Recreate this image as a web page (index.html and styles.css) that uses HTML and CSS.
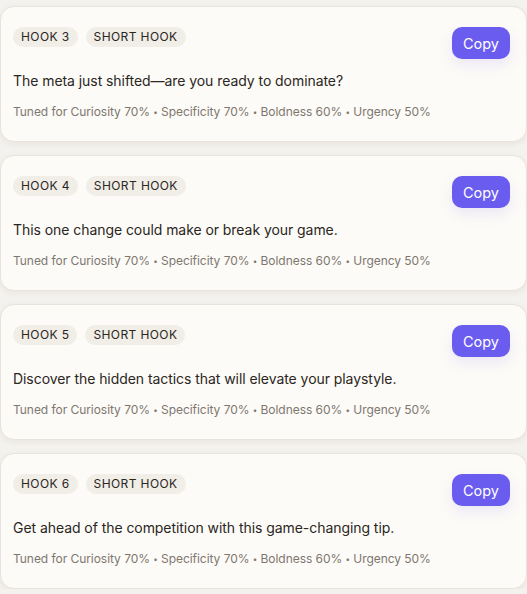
FILE: index.html
```html
<!DOCTYPE html>
<html lang="en">
<head>
<meta charset="utf-8">
<title>Hooks</title>
<link rel="stylesheet" href="styles.css">
</head>
<body>
<div class="list">
  <div class="card">
    <div class="card-head">
      <div class="chips"><span class="chip">Hook 3</span><span class="chip">Short hook</span></div>
      <button class="copy">Copy</button>
    </div>
    <p class="hook">The meta just shifted—are you ready to dominate?</p>
    <p class="meta">Tuned for Curiosity 70% <span class="dot">•</span> Specificity 70% <span class="dot">•</span> Boldness 60% <span class="dot">•</span> Urgency 50%</p>
  </div>
  <div class="card">
    <div class="card-head">
      <div class="chips"><span class="chip">Hook 4</span><span class="chip">Short hook</span></div>
      <button class="copy">Copy</button>
    </div>
    <p class="hook">This one change could make or break your game.</p>
    <p class="meta">Tuned for Curiosity 70% <span class="dot">•</span> Specificity 70% <span class="dot">•</span> Boldness 60% <span class="dot">•</span> Urgency 50%</p>
  </div>
  <div class="card">
    <div class="card-head">
      <div class="chips"><span class="chip">Hook 5</span><span class="chip">Short hook</span></div>
      <button class="copy">Copy</button>
    </div>
    <p class="hook">Discover the hidden tactics that will elevate your playstyle.</p>
    <p class="meta">Tuned for Curiosity 70% <span class="dot">•</span> Specificity 70% <span class="dot">•</span> Boldness 60% <span class="dot">•</span> Urgency 50%</p>
  </div>
  <div class="card">
    <div class="card-head">
      <div class="chips"><span class="chip">Hook 6</span><span class="chip">Short hook</span></div>
      <button class="copy">Copy</button>
    </div>
    <p class="hook">Get ahead of the competition with this game-changing tip.</p>
    <p class="meta">Tuned for Curiosity 70% <span class="dot">•</span> Specificity 70% <span class="dot">•</span> Boldness 60% <span class="dot">•</span> Urgency 50%</p>
  </div>
</div>
</body>
</html>
```
FILE: styles.css
```css
html, body {
  margin: 0;
  padding: 0;
  background: #f4f2ee;
  font-family: Inter, "Noto Sans", "Liberation Sans", sans-serif;
}
.list {
  display: flex;
  flex-direction: column;
  gap: 13px;
  padding-top: 6px;
}
.card {
  background: #fdfbf7;
  border: 1px solid #e8e3dc;
  border-radius: 14px;
  padding: 20px 16px 20px 12px;
  box-shadow: 0 2px 6px rgba(60, 40, 20, 0.06);
}
.card-head {
  display: flex;
  justify-content: space-between;
  align-items: flex-start;
}
.chips {
  display: flex;
  gap: 8px;
}
.chip {
  background: #f1ede7;
  color: #2a2622;
  font-size: 12px;
  letter-spacing: 0.4px;
  text-transform: uppercase;
  line-height: 20px;
  height: 20px;
  padding: 0 8px;
  border-radius: 10px;
}
.copy {
  background: #6b5cf0;
  color: #ffffff;
  border: none;
  border-radius: 10px;
  height: 32px;
  padding: 0 11px;
  font-family: inherit;
  font-size: 14.5px;
  box-shadow: 0 6px 14px rgba(107, 92, 240, 0.12);
}
.hook {
  margin: 12px 0 0;
  font-size: 14px;
  letter-spacing: -0.06px;
  line-height: 20px;
  color: #2a2622;
}
.meta {
  margin: 12px 0 0;
  font-size: 12px;
  letter-spacing: -0.05px;
  line-height: 18px;
  color: #7d7770;
}
.dot {
  font-size: 8px;
  vertical-align: 1px;
}
```
